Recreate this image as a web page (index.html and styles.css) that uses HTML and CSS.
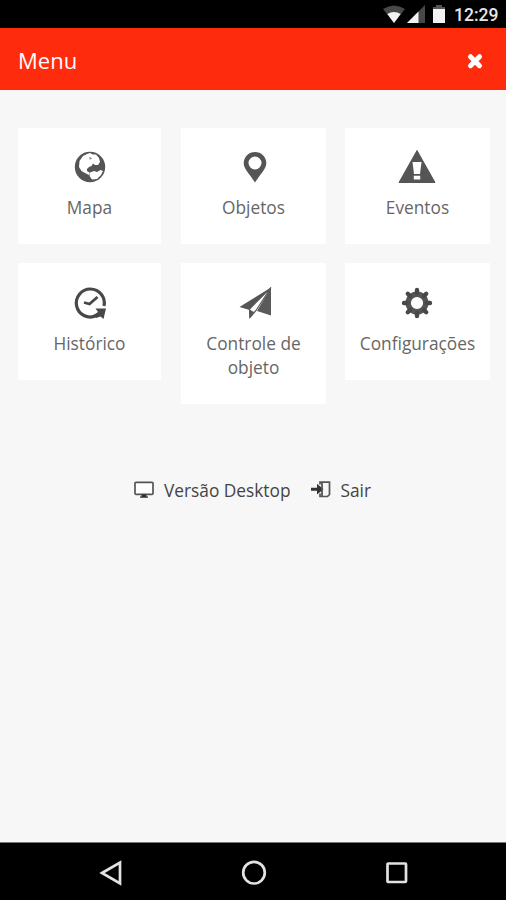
FILE: index.html
```html
<!DOCTYPE html>
<html lang="pt">
<head>
<meta charset="utf-8">
<title>Menu</title>
<link rel="stylesheet" href="styles.css">
</head>
<body>
<div class="status">
  <svg class="wifi" width="22" height="18" viewBox="0 0 22 18"><path d="M0 4Q11-3 22 4L11 18Z" fill="#484848"/><path d="M4.300 9Q11 5 17.700 9L11 18Z" fill="#f2f2f2"/></svg>
  <svg class="signal" width="18" height="18" viewBox="0 0 18 18"><path d="M0 18L18 0V18Z" fill="#484848"/><path d="M0 18L11.500 6.500V18Z" fill="#f2f2f2"/></svg>
  <svg class="battery" width="12" height="18" viewBox="0 0 12 18"><path d="M0 2H3V0H9V2H12V5H0Z" fill="#555"/><path d="M0 4H12V18H0Z" fill="#f2f2f2"/></svg>
  <span class="clock">12:29</span>
</div>
<header class="header">
  <h1>Menu</h1>
  <svg class="close" width="14" height="14" viewBox="0 0 14 14"><path d="M2.500 3.700L11.500 12.700M11.500 3.700L2.500 12.700" stroke="#fff" stroke-width="5" stroke-linecap="round"/></svg>
</header>
<main>
  <nav class="grid">
    <a class="card"><svg viewBox="0 0 36 36"><circle cx="18" cy="18" r="15.200" fill="#555"/><path d="M11 7L15 5L18 4L21 5.500L24 5.500L27 9L28 13L26 16L23 16L21 14.500L19.500 17L17 18L15 20L15 22L18 24L17 26L13 24L9.500 22L7 18L7.500 12Z" fill="#fff"/><path d="M18 23.500L22 22L25 23L28.500 21L31 22L29 26L25 30L20 30.500L17.500 27Z" fill="#fff"/><path d="M17 8L20 9L18 11Z" fill="#888"/></svg><span>Mapa</span></a>
    <a class="card"><svg viewBox="0 0 36 36"><path fill-rule="evenodd" d="M19 3A11.300 11.300 0 0 0 7.700 14.300C7.700 20 13 24 19 33.500C25 24 30.300 20 30.300 14.300A11.300 11.300 0 0 0 19 3ZM19 7.500A6.500 6.500 0 1 1 19 20.500A6.500 6.500 0 0 1 19 7.500Z" fill="#555"/></svg><span>Objetos</span></a>
    <a class="card"><svg viewBox="0 0 36 36"><path d="M18 1.500L36 33.500H0Z" fill="#555" stroke="#555" stroke-linejoin="round"/><path d="M13.500 13H22.500L21 25H15ZM14.800 26.800H21.200V30.500H14.800Z" fill="#fff"/></svg><span>Eventos</span></a>
    <a class="card lower"><svg viewBox="0 0 36 36"><path d="M32 21A14 14 0 1 0 24 30.800" fill="none" stroke="#484848" stroke-width="3.200"/><path d="M23.500 23.500H34L31.500 34L28.500 31.500L24 33L21.500 30L26 27Z" fill="#484848"/><path d="M12 17.500L17.500 19L25.500 12" fill="none" stroke="#484848" stroke-width="2.800"/></svg><span>Histórico</span></a>
    <a class="card lower"><svg viewBox="0 0 36 36"><path d="M35 2.500V30.500L21 26Z" fill="#5a5a5a"/><path d="M35 2.500L3.500 22L13.500 25Z" fill="#555"/><path d="M13.500 24L35 2.500L20 25.500L14 32.500Z" fill="#fff" stroke="#555" stroke-width="1.200"/><path d="M13 24L16 26L18 27L13.500 33Z" fill="#555"/></svg><span>Controle de<br>objeto</span></a>
    <a class="card lower"><svg viewBox="0 0 36 36"><circle cx="18" cy="18" r="8.800" fill="none" stroke="#555" stroke-width="5.400"/><g stroke="#484848" stroke-width="4.400" stroke-linecap="round"><path d="M18 5V8M18 28V31M5 18H8M28 18H31M8.800 8.800L11 11M25 25L27.200 27.200M8.800 27.200L11 25M25 11L27.200 8.800"/></g></svg><span>Configurações</span></a>
  </nav>
  <div class="links">
    <a><svg width="20" height="18" viewBox="0 0 20 18"><rect x="0" y=".3" width="18" height="12" rx="1" fill="#fff" stroke="#555" stroke-width="1.700"/><path d="M6.500 12.500H11.500V14.500H13V15.800H5V14.500H6.500Z" fill="#333"/></svg><span>Versão Desktop</span></a>
    <a><svg width="20" height="18" viewBox="0 0 20 18"><path d="M9 2.500V.2H18.500V12.500L16.500 14.500H9V11.500" fill="none" stroke="#555" stroke-width="1.700"/><path d="M0 5.800H6V1.800L12.500 7.200L6 12.500V8.700H0Z" fill="#333"/><path d="M11 .5V14" stroke="#555" stroke-width="1.800"/></svg><span>Sair</span></a>
  </div>
</main>
<footer class="navbar">
  <svg width="24" height="26" viewBox="0 0 24 26"><path d="M2 13L20 2.500V23.500Z"/></svg>
  <svg width="26" height="26" viewBox="0 0 26 26"><circle cx="12" cy="12.700" r="10.800"/></svg>
  <svg width="24" height="24" viewBox="0 0 24 24"><rect x="2.500" y="2.500" width="18.500" height="18.500" rx=".8"/></svg>
</footer>
</body>
</html>
```
FILE: styles.css
```css
* { box-sizing: border-box; }
body { margin: 0; width: 506px; height: 900px; display: flex; flex-direction: column; background: #f7f7f7; font-family: "Open Sans", sans-serif; color: #666; overflow: hidden; }
svg { display: block; flex: none; overflow: visible; }
.status { height: 28px; background: #000; display: flex; align-items: flex-start; justify-content: flex-end; padding: 5px 8px 0 0; }
.signal { margin-left: 2px; }
.battery { margin-left: 8px; }
.clock { margin-left: 9px; width: 44px; font: 500 17.500px/20px Roboto, sans-serif; color: #e6e6e6; white-space: nowrap; }
.header { height: 62px; background: #ff2b0d; display: flex; align-items: center; justify-content: space-between; padding: 2px 24px 0 18px; }
.header h1 { margin: -1px 0 0; font-size: 22px; font-weight: 400; line-height: 30px; color: #fff; }
main { flex: 1; padding: 38px 16px 0 18px; }
.grid { display: grid; grid-template-columns: 143px 145px 144px; column-gap: 20px; row-gap: 19px; align-items: start; }
.card { min-height: 116px; padding: 21px 0 24px; background: #fff; display: flex; flex-direction: column; align-items: center; text-align: center; font-size: 17.300px; line-height: 24px; }
.card.lower { min-height: 117px; padding-top: 22px; }
.card:nth-child(3n) { margin-left: -1px; }
.card svg { width: 36px; height: 36px; margin-bottom: 11px; }
.card:nth-child(3n) svg { margin-left: -1px; }
.links { display: flex; justify-content: center; gap: 21px; margin: 75px 2px 0 0; font-size: 17.300px; line-height: 24px; color: #444; }
.links a { display: flex; align-items: center; gap: 9px; }
.navbar { height: 58px; background: #000; border-top: 1px solid #777; display: flex; align-items: center; justify-content: space-between; padding: 2px 97px 0 100px; }
.navbar svg { fill: none; stroke: #e2e2e2; stroke-width: 2.700; }
```
